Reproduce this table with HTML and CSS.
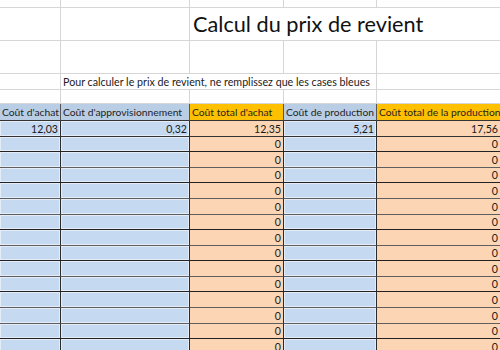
FILE: index.html
```html
<!DOCTYPE html>
<html lang="fr">
<head>
<meta charset="utf-8">
<title>Calcul du prix de revient</title>
<link rel="stylesheet" href="styles.css">
</head>
<body>
<div class="sheet">
  <div class="c g h0"></div><div class="c g h0"></div><div class="c g h0"></div><div class="c g h0"></div><div class="c g h0"></div>
  <div class="c g h1"></div><div class="c g h1"></div><div class="c g h1 title span3">Calcul du prix de revient</div>
  <div class="c g h1"></div><div class="c g h1"></div><div class="c g h1"></div><div class="c g h1"></div><div class="c g h1"></div>
  <div class="c g h3"></div><div class="c g h3 note span3">Pour calculer le prix de revient, ne remplissez que les cases bleues</div><div class="c g h3"></div>
  <div class="c g h4"></div><div class="c g h4"></div><div class="c g h4"></div><div class="c g h4"></div><div class="c g h4"></div>

  <div class="c hd blue">Coût d'achat</div>
  <div class="c hd blue">Coût d'approvisionnement</div>
  <div class="c hd gold">Coût total d'achat</div>
  <div class="c hd blue">Coût de production</div>
  <div class="c hd gold">Coût total de la production</div>

  <div class="c d in first">12,03</div><div class="c d in first">0,32</div><div class="c d out first">12,35</div><div class="c d in first">5,21</div><div class="c d out first">17,56</div>

  <div class="c d in r15"></div><div class="c d in r15"></div><div class="c d out r15">0</div><div class="c d in r15"></div><div class="c d out r15">0</div>
  <div class="c d in r16"></div><div class="c d in r16"></div><div class="c d out r16">0</div><div class="c d in r16"></div><div class="c d out r16">0</div>
  <div class="c d in r15"></div><div class="c d in r15"></div><div class="c d out r15">0</div><div class="c d in r15"></div><div class="c d out r15">0</div>
  <div class="c d in r16"></div><div class="c d in r16"></div><div class="c d out r16">0</div><div class="c d in r16"></div><div class="c d out r16">0</div>
  <div class="c d in r16"></div><div class="c d in r16"></div><div class="c d out r16">0</div><div class="c d in r16"></div><div class="c d out r16">0</div>
  <div class="c d in r15"></div><div class="c d in r15"></div><div class="c d out r15">0</div><div class="c d in r15"></div><div class="c d out r15">0</div>
  <div class="c d in r16"></div><div class="c d in r16"></div><div class="c d out r16">0</div><div class="c d in r16"></div><div class="c d out r16">0</div>
  <div class="c d in r15"></div><div class="c d in r15"></div><div class="c d out r15">0</div><div class="c d in r15"></div><div class="c d out r15">0</div>
  <div class="c d in r16"></div><div class="c d in r16"></div><div class="c d out r16">0</div><div class="c d in r16"></div><div class="c d out r16">0</div>
  <div class="c d in r15"></div><div class="c d in r15"></div><div class="c d out r15">0</div><div class="c d in r15"></div><div class="c d out r15">0</div>
  <div class="c d in r16"></div><div class="c d in r16"></div><div class="c d out r16">0</div><div class="c d in r16"></div><div class="c d out r16">0</div>
  <div class="c d in r16"></div><div class="c d in r16"></div><div class="c d out r16">0</div><div class="c d in r16"></div><div class="c d out r16">0</div>
  <div class="c d in r15"></div><div class="c d in r15"></div><div class="c d out r15">0</div><div class="c d in r15"></div><div class="c d out r15">0</div>
  <div class="c d in r16"></div><div class="c d in r16"></div><div class="c d out r16">0</div><div class="c d in r16"></div><div class="c d out r16">0</div>
  <div class="c d in r16"></div><div class="c d in r16"></div><div class="c d out r16">0</div><div class="c d in r16"></div><div class="c d out r16">0</div>
</div>
</body>
</html>
```

FILE: styles.css
```css
html, body {
  margin: 0;
  padding: 0;
  background: #ffffff;
}

.sheet {
  width: 500px;
  height: 350px;
  overflow: hidden;
  display: grid;
  grid-template-columns: 61px 129px 94px 93px 124px;
  font-family: Lato, "Liberation Sans", sans-serif;
  color: #1a1a1a;
}

.c {
  box-sizing: border-box;
  display: flex;
  align-items: center;
  white-space: nowrap;
  min-width: 0;
}

.g {
  border-right: 1px solid #d6d6d6;
  border-bottom: 1px solid #d6d6d6;
}

.h0 { height: 8px; }
.h1 { height: 33px; }
.h3 { height: 16px; }
.h4 { height: 14px; }

.span3 { grid-column: span 3; }

.title {
  font-size: 21.7px;
  padding-left: 3px;
  color: #111;
  overflow: visible;
}

.note {
  font-size: 10.7px;
  padding-left: 2px;
  color: #222;
}

.hd {
  height: 17px;
  font-size: 10.3px;
  padding-left: 2px;
  border-right: 1px solid #555;
  border-bottom: 1px solid #333;
  overflow: visible;
  color: #1f1f1f;
}

.hd:first-child { padding-left: 1px; }

.hd.blue { background: #b9cde5; }
.hd.gold { background: #ffc000; }

.d {
  justify-content: flex-end;
  padding-right: 2px;
  font-size: 10.6px;
  border-right: 1px solid #2a2a2a;
  border-bottom: 1px solid #333;
  color: #1a1a1a;
}

.d.in {
  background: #c5d9f1;
  box-shadow: inset 0 0 0 1px #e3ecf7;
}

.d.out { background: #fcd5b4; }

.first { height: 16px; }
.r15 { height: 15px; border-bottom-color: #222; }
.r16 { height: 16px; border-bottom-color: #5e5e5e; }
```
